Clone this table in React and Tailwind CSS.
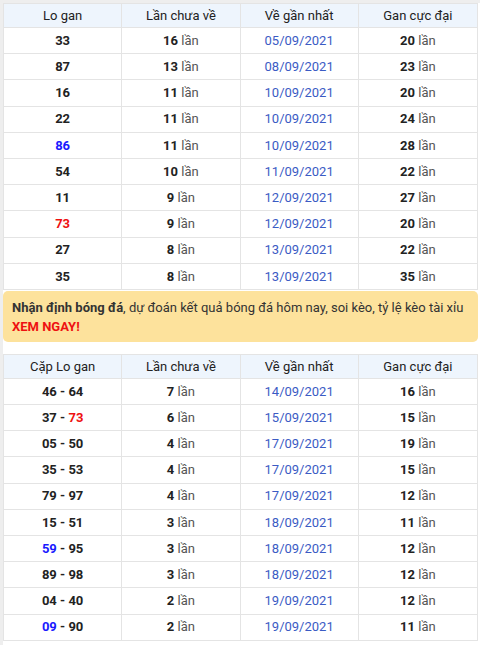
import React from 'react';

const gan1 = [
  ['33', '16', '05/09/2021', '20'],
  ['87', '13', '08/09/2021', '23'],
  ['16', '11', '10/09/2021', '20'],
  ['22', '11', '10/09/2021', '24'],
  [<span className="text-[#1a1aff]">86</span>, '11', '10/09/2021', '28'],
  ['54', '10', '11/09/2021', '22'],
  ['11', '9', '12/09/2021', '27'],
  [<span className="text-[#ee1111]">73</span>, '9', '12/09/2021', '20'],
  ['27', '8', '13/09/2021', '22'],
  ['35', '8', '13/09/2021', '35'],
];

const gan2 = [
  ['46 - 64', '7', '14/09/2021', '16'],
  [<>37 - <span className="text-[#ee1111]">73</span></>, '6', '15/09/2021', '15'],
  ['05 - 50', '4', '17/09/2021', '19'],
  ['35 - 53', '4', '17/09/2021', '15'],
  ['79 - 97', '4', '17/09/2021', '12'],
  ['15 - 51', '3', '18/09/2021', '11'],
  [<><span className="text-[#1a1aff]">59</span> - 95</>, '3', '18/09/2021', '12'],
  ['89 - 98', '3', '18/09/2021', '12'],
  ['04 - 40', '2', '19/09/2021', '12'],
  [<><span className="text-[#1a1aff]">09</span> - 90</>, '2', '19/09/2021', '11'],
];

const Cell = ({ children, last, head }) => (
  <div className={`flex items-center justify-center ${head ? 'h-[23px]' : 'h-[25.2px]'} ${last ? '' : 'border-r border-[#e4e4e4]'}`}>
    {children}
  </div>
);

const GanTable = ({ first, rows }) => (
  <div className="border border-[#e4e4e4] text-[13px] text-[#222]">
    <div className="grid grid-cols-4 bg-[#eef5fd] border-b border-[#e4e4e4]">
      <Cell head>{first}</Cell>
      <Cell head>Lần chưa về</Cell>
      <Cell head>Về gần nhất</Cell>
      <Cell head last>Gan cực đại</Cell>
    </div>
    {rows.map((r, i) => (
      <div key={i} className={`grid grid-cols-4 ${i < rows.length - 1 ? 'border-b border-[#e4e4e4]' : ''}`}>
        <Cell><span className="font-bold">{r[0]}</span></Cell>
        <Cell><span><b>{r[1]}</b> <span className="text-[#555]">lần</span></span></Cell>
        <Cell><span className="text-[#3b5bc4]">{r[2]}</span></Cell>
        <Cell last><span><b>{r[3]}</b> <span className="text-[#555]">lần</span></span></Cell>
      </div>
    ))}
  </div>
);

const App = () => {
  return (
    <div className="bg-[#eeeeee] pt-[3px] pl-[3px] min-h-screen" style={{ fontFamily: 'Roboto, "Liberation Sans", sans-serif' }}>
      <div className="bg-white pr-[2px] pb-[4px]">
        <GanTable first="Lo gan" rows={gan1} />

        <div className="bg-[#fde29c] rounded-[5px] mt-[1px] px-[9px] pt-[7px] pb-[6px] text-[13px] leading-[19px] text-[#333]">
          <b>Nhận định bóng đá</b>, dự đoán kết quả bóng đá hôm nay, soi kèo, tỷ lệ kèo tài xỉu{' '}
          <b className="text-[#ee1111]">XEM NGAY!</b>
        </div>

        <div className="h-[12px]" />
        <GanTable first="Cặp Lo gan" rows={gan2} />
      </div>
    </div>
  );
};

export default App;
